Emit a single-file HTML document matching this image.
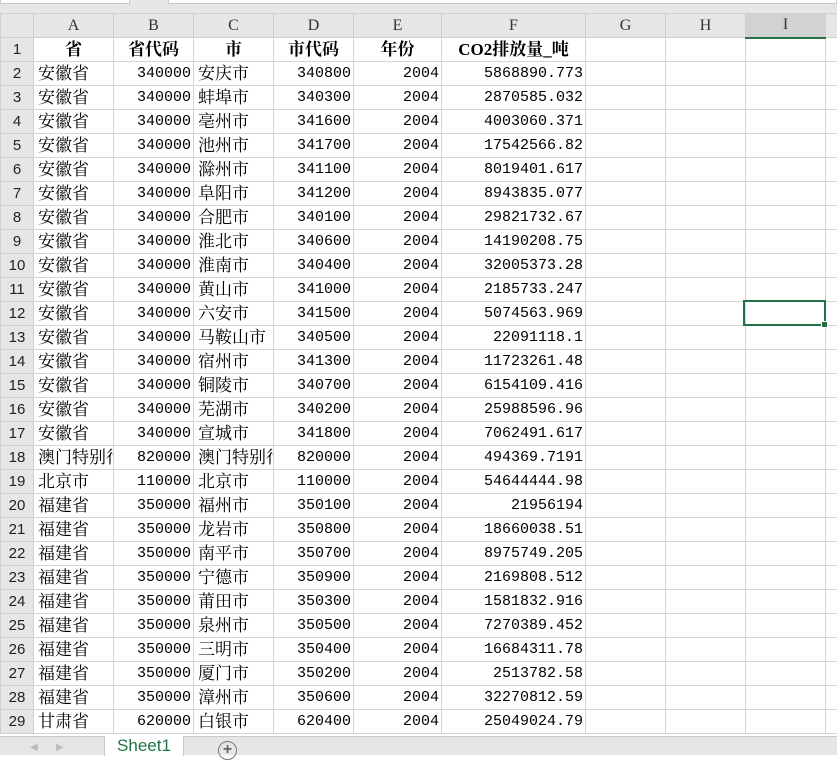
<!DOCTYPE html>
<html><head><meta charset="utf-8">
<style>
*{margin:0;padding:0;box-sizing:border-box}
body{width:837px;height:755px;overflow:hidden;background:#fff;position:relative;font-family:"Liberation Serif","Noto Serif CJK SC",serif}
.top{position:absolute;left:0;top:0;width:837px;height:14px;background:#e6e6e6;border-bottom:1px solid #d0d0d0}
.top .b1{position:absolute;left:0;top:0;width:130px;height:4px;background:#fff;border:1px solid #c8c8c8;border-top:none}
.top .b2{position:absolute;left:168px;top:0;width:669px;height:4px;background:#fff;border:1px solid #c8c8c8;border-top:none}
table{position:absolute;left:0;top:13px;border-collapse:collapse;table-layout:fixed;width:837px}
td{height:24px;border:1px solid #d4d4d4;overflow:hidden;white-space:nowrap;font-size:17px;padding:0 3px;color:#000;line-height:22px}
tr.h td{height:24px;background:#e6e6e6;text-align:center;font-size:16px;color:#333;border-color:#cfcfcf}
td.rh{background:#e6e6e6;text-align:center;font-family:"Liberation Sans",sans-serif;font-size:15px;color:#222;padding:0;border-color:#cfcfcf}
td.r{text-align:right;font-family:"Liberation Mono",monospace;font-size:15px;padding-right:2px}
td.c{text-align:center;font-weight:bold}
td.z{font-family:"Liberation Serif","Noto Serif CJK SC",serif;font-size:17px;padding-left:4px;text-overflow:clip}
tr.h td.sel{background:#d2d2d2;border-bottom:2px solid #217346}
.selbox{position:absolute;left:743px;top:300px;width:83px;height:26px;border:2px solid #217346}
.selbox:after{content:"";position:absolute;right:-4px;bottom:-4px;width:5px;height:5px;background:#217346;border:1px solid #fff}
.tabs{position:absolute;left:0;top:736px;width:837px;height:19px;background:#e6e6e6;border-top:1px solid #c8c8c8}
.sheet{position:absolute;left:104px;top:-1px;width:80px;height:20px;background:#fff;color:#217346;font-family:"Liberation Sans",sans-serif;font-size:17px;text-align:center;line-height:20px;border-left:1px solid #c8c8c8;border-right:1px solid #c8c8c8}
.plus{position:absolute;left:218px;top:4px;width:19px;height:19px;border:1.5px solid #777;border-radius:50%;color:#666;font:bold 16px/15px "Liberation Sans",sans-serif;text-align:center}
.arr{position:absolute;top:5px;color:#bbb;font-size:10px;font-family:"Liberation Sans",sans-serif}
</style></head><body>
<div class="top"><div class="b1"></div><div class="b2"></div></div>
<table>
<colgroup><col style="width:33px"><col style="width:80px"><col style="width:80px"><col style="width:80px"><col style="width:80px"><col style="width:88px"><col style="width:144px"><col style="width:80px"><col style="width:80px"><col style="width:80px"><col style="width:12px"></colgroup>
<tr class="h"><td style="background:#e6e6e6"></td><td>A</td><td>B</td><td>C</td><td>D</td><td>E</td><td>F</td><td>G</td><td>H</td><td class="sel">I</td><td></td></tr>
<tr><td class="rh">1</td><td class="c">省</td><td class="c">省代码</td><td class="c">市</td><td class="c">市代码</td><td class="c">年份</td><td class="c">CO2排放量_吨</td><td></td><td></td><td></td><td></td></tr>
<tr><td class="rh">2</td><td class="z">安徽省</td><td class="r">340000</td><td class="z">安庆市</td><td class="r">340800</td><td class="r">2004</td><td class="r">5868890.773</td><td></td><td></td><td></td><td></td></tr>
<tr><td class="rh">3</td><td class="z">安徽省</td><td class="r">340000</td><td class="z">蚌埠市</td><td class="r">340300</td><td class="r">2004</td><td class="r">2870585.032</td><td></td><td></td><td></td><td></td></tr>
<tr><td class="rh">4</td><td class="z">安徽省</td><td class="r">340000</td><td class="z">亳州市</td><td class="r">341600</td><td class="r">2004</td><td class="r">4003060.371</td><td></td><td></td><td></td><td></td></tr>
<tr><td class="rh">5</td><td class="z">安徽省</td><td class="r">340000</td><td class="z">池州市</td><td class="r">341700</td><td class="r">2004</td><td class="r">17542566.82</td><td></td><td></td><td></td><td></td></tr>
<tr><td class="rh">6</td><td class="z">安徽省</td><td class="r">340000</td><td class="z">滁州市</td><td class="r">341100</td><td class="r">2004</td><td class="r">8019401.617</td><td></td><td></td><td></td><td></td></tr>
<tr><td class="rh">7</td><td class="z">安徽省</td><td class="r">340000</td><td class="z">阜阳市</td><td class="r">341200</td><td class="r">2004</td><td class="r">8943835.077</td><td></td><td></td><td></td><td></td></tr>
<tr><td class="rh">8</td><td class="z">安徽省</td><td class="r">340000</td><td class="z">合肥市</td><td class="r">340100</td><td class="r">2004</td><td class="r">29821732.67</td><td></td><td></td><td></td><td></td></tr>
<tr><td class="rh">9</td><td class="z">安徽省</td><td class="r">340000</td><td class="z">淮北市</td><td class="r">340600</td><td class="r">2004</td><td class="r">14190208.75</td><td></td><td></td><td></td><td></td></tr>
<tr><td class="rh">10</td><td class="z">安徽省</td><td class="r">340000</td><td class="z">淮南市</td><td class="r">340400</td><td class="r">2004</td><td class="r">32005373.28</td><td></td><td></td><td></td><td></td></tr>
<tr><td class="rh">11</td><td class="z">安徽省</td><td class="r">340000</td><td class="z">黄山市</td><td class="r">341000</td><td class="r">2004</td><td class="r">2185733.247</td><td></td><td></td><td></td><td></td></tr>
<tr><td class="rh">12</td><td class="z">安徽省</td><td class="r">340000</td><td class="z">六安市</td><td class="r">341500</td><td class="r">2004</td><td class="r">5074563.969</td><td></td><td></td><td></td><td></td></tr>
<tr><td class="rh">13</td><td class="z">安徽省</td><td class="r">340000</td><td class="z">马鞍山市</td><td class="r">340500</td><td class="r">2004</td><td class="r">22091118.1</td><td></td><td></td><td></td><td></td></tr>
<tr><td class="rh">14</td><td class="z">安徽省</td><td class="r">340000</td><td class="z">宿州市</td><td class="r">341300</td><td class="r">2004</td><td class="r">11723261.48</td><td></td><td></td><td></td><td></td></tr>
<tr><td class="rh">15</td><td class="z">安徽省</td><td class="r">340000</td><td class="z">铜陵市</td><td class="r">340700</td><td class="r">2004</td><td class="r">6154109.416</td><td></td><td></td><td></td><td></td></tr>
<tr><td class="rh">16</td><td class="z">安徽省</td><td class="r">340000</td><td class="z">芜湖市</td><td class="r">340200</td><td class="r">2004</td><td class="r">25988596.96</td><td></td><td></td><td></td><td></td></tr>
<tr><td class="rh">17</td><td class="z">安徽省</td><td class="r">340000</td><td class="z">宣城市</td><td class="r">341800</td><td class="r">2004</td><td class="r">7062491.617</td><td></td><td></td><td></td><td></td></tr>
<tr><td class="rh">18</td><td class="z">澳门特别行政区</td><td class="r">820000</td><td class="z">澳门特别行政区</td><td class="r">820000</td><td class="r">2004</td><td class="r">494369.7191</td><td></td><td></td><td></td><td></td></tr>
<tr><td class="rh">19</td><td class="z">北京市</td><td class="r">110000</td><td class="z">北京市</td><td class="r">110000</td><td class="r">2004</td><td class="r">54644444.98</td><td></td><td></td><td></td><td></td></tr>
<tr><td class="rh">20</td><td class="z">福建省</td><td class="r">350000</td><td class="z">福州市</td><td class="r">350100</td><td class="r">2004</td><td class="r">21956194</td><td></td><td></td><td></td><td></td></tr>
<tr><td class="rh">21</td><td class="z">福建省</td><td class="r">350000</td><td class="z">龙岩市</td><td class="r">350800</td><td class="r">2004</td><td class="r">18660038.51</td><td></td><td></td><td></td><td></td></tr>
<tr><td class="rh">22</td><td class="z">福建省</td><td class="r">350000</td><td class="z">南平市</td><td class="r">350700</td><td class="r">2004</td><td class="r">8975749.205</td><td></td><td></td><td></td><td></td></tr>
<tr><td class="rh">23</td><td class="z">福建省</td><td class="r">350000</td><td class="z">宁德市</td><td class="r">350900</td><td class="r">2004</td><td class="r">2169808.512</td><td></td><td></td><td></td><td></td></tr>
<tr><td class="rh">24</td><td class="z">福建省</td><td class="r">350000</td><td class="z">莆田市</td><td class="r">350300</td><td class="r">2004</td><td class="r">1581832.916</td><td></td><td></td><td></td><td></td></tr>
<tr><td class="rh">25</td><td class="z">福建省</td><td class="r">350000</td><td class="z">泉州市</td><td class="r">350500</td><td class="r">2004</td><td class="r">7270389.452</td><td></td><td></td><td></td><td></td></tr>
<tr><td class="rh">26</td><td class="z">福建省</td><td class="r">350000</td><td class="z">三明市</td><td class="r">350400</td><td class="r">2004</td><td class="r">16684311.78</td><td></td><td></td><td></td><td></td></tr>
<tr><td class="rh">27</td><td class="z">福建省</td><td class="r">350000</td><td class="z">厦门市</td><td class="r">350200</td><td class="r">2004</td><td class="r">2513782.58</td><td></td><td></td><td></td><td></td></tr>
<tr><td class="rh">28</td><td class="z">福建省</td><td class="r">350000</td><td class="z">漳州市</td><td class="r">350600</td><td class="r">2004</td><td class="r">32270812.59</td><td></td><td></td><td></td><td></td></tr>
<tr><td class="rh">29</td><td class="z">甘肃省</td><td class="r">620000</td><td class="z">白银市</td><td class="r">620400</td><td class="r">2004</td><td class="r">25049024.79</td><td></td><td></td><td></td><td></td></tr>
</table>
<div class="selbox"></div>
<div class="tabs">
<span class="arr" style="left:30px">◀</span><span class="arr" style="left:56px">▶</span>
<div class="sheet">Sheet1</div>
<div class="plus">+</div>
</div>
</body></html>
